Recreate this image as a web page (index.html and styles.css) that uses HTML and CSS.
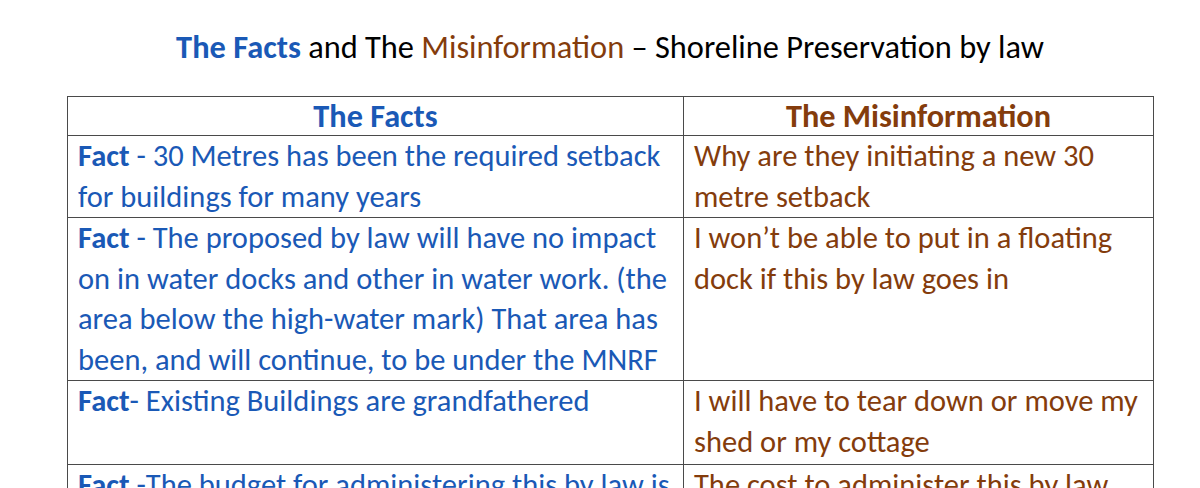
FILE: index.html
```html
<!DOCTYPE html>
<html lang="en">
<head>
<meta charset="utf-8">
<title>The Facts and The Misinformation</title>
<link rel="stylesheet" href="styles.css">
</head>
<body>
<main class="page">
  <h1 class="title"><span class="blue strong">The Facts</span> and The <span class="brown">Misinformation</span> – Shoreline Preservation by law</h1>
  <table class="facts">
    <colgroup><col class="col-fact"><col class="col-mis"></colgroup>
    <thead>
      <tr><th class="blue">The Facts</th><th class="brown">The Misinformation</th></tr>
    </thead>
    <tbody>
      <tr class="r1">
        <td class="blue"><b>Fact</b> - 30 Metres has been the required setback<br>for buildings for many years</td>
        <td class="brown">Why are they initiating a new 30<br>metre setback</td>
      </tr>
      <tr class="r2">
        <td class="blue"><b>Fact</b> - The proposed by law will have no impact<br>on in water docks and other in water work. (the<br>area below the high-water mark) That area has<br>been, and will continue, to be under the MNRF</td>
        <td class="brown">I won’t be able to put in a floating<br>dock if this by law goes in</td>
      </tr>
      <tr class="r3">
        <td class="blue"><b>Fact</b>- Existing Buildings are grandfathered</td>
        <td class="brown">I will have to tear down or move my<br>shed or my cottage</td>
      </tr>
      <tr class="r4">
        <td class="blue"><b>Fact</b> -The budget for administering this by law is</td>
        <td class="brown">The cost to administer this by law</td>
      </tr>
    </tbody>
  </table>
</main>
</body>
</html>
```
FILE: styles.css
```css
html, body {
  margin: 0;
  padding: 0;
  background: #ffffff;
}
body {
  font-family: Carlito, Calibri, Lato, "Open Sans", sans-serif;
  color: #000;
  overflow: hidden;
}
.page {
  padding: 27px 0 0 67px;
  width: 1086px;
}
.title {
  margin: 0 0 29px 0;
  font-size: 32.4px;
  font-weight: normal;
  line-height: 40px;
  text-align: center;
  white-space: nowrap;
}
.strong { font-weight: bold; }
.blue { color: #1a59b6; }
.brown { color: #843c0c; }
.facts {
  border-collapse: collapse;
  table-layout: fixed;
  width: 1086px;
  font-size: 30.5px;
  line-height: 40.5px;
}
.col-fact { width: 616px; }
.col-mis { width: 470px; }
.facts th, .facts td {
  border: 1.5px solid #4a4a4a;
  padding: 0 10px;
  vertical-align: top;
  text-align: left;
  white-space: nowrap;
  overflow: hidden;
}
.facts th {
  text-align: center;
  font-weight: bold;
  font-size: 32.3px;
  height: 38px;
  line-height: 38px;
}
.facts b { font-weight: bold; }
.r1 td { height: 81px; }
.r2 td { height: 161px; }
.r3 td { height: 83px; }
```
